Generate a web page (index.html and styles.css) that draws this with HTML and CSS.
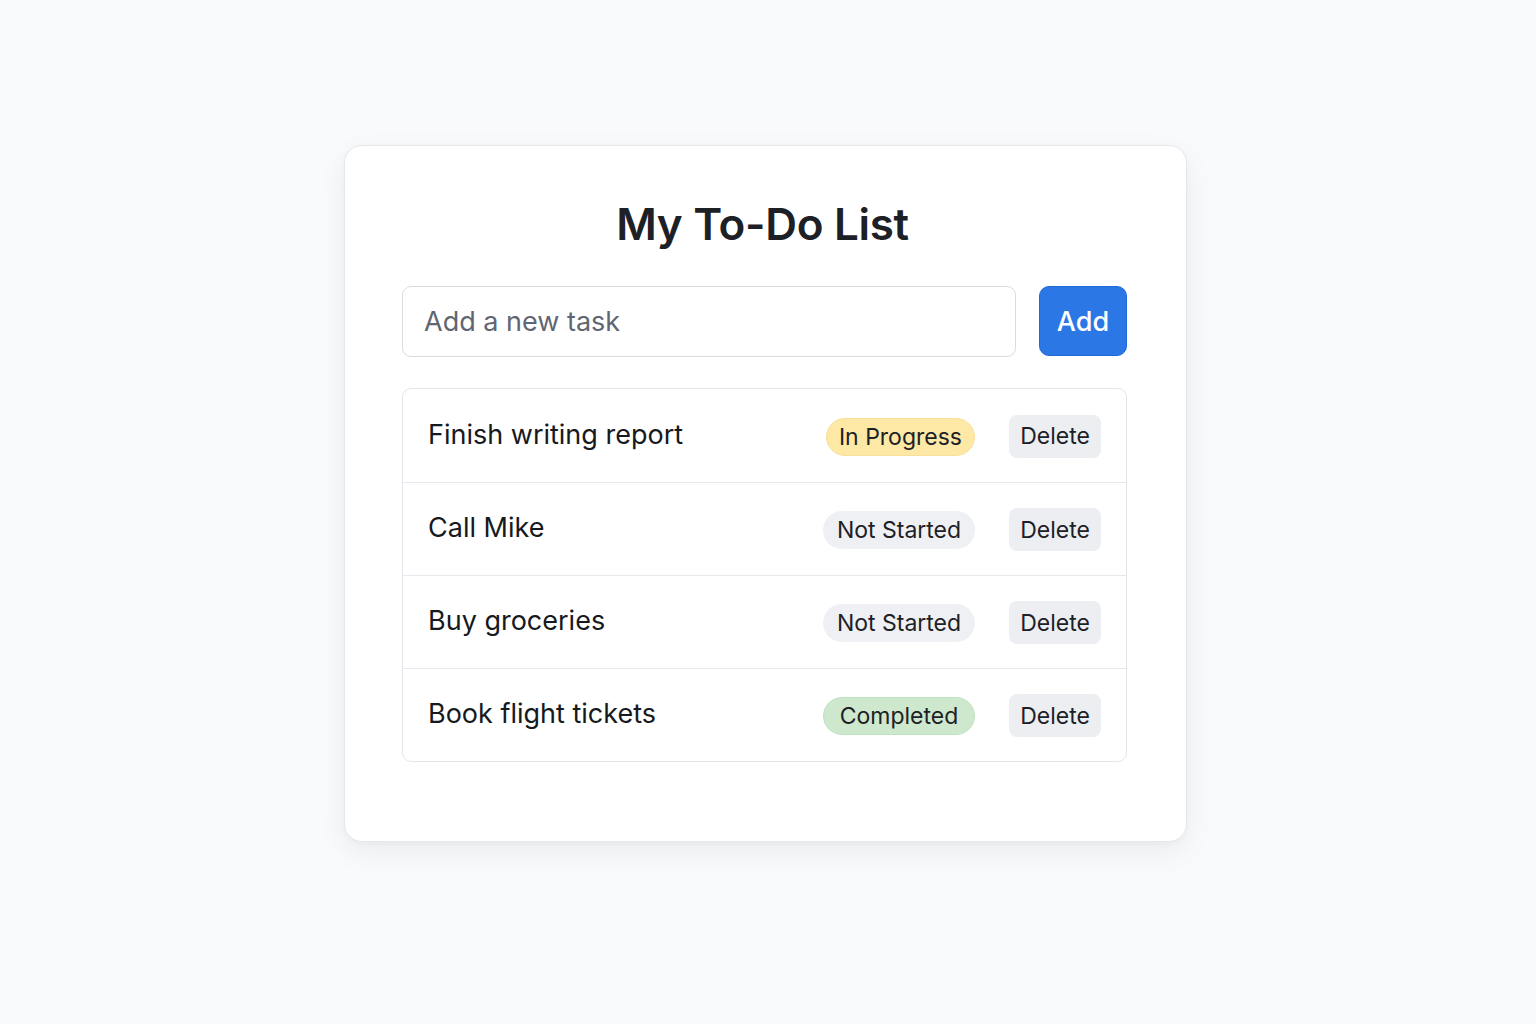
FILE: index.html
```html
<!DOCTYPE html>
<html lang="en">
<head>
<meta charset="utf-8">
<title>My To-Do List</title>
<link rel="stylesheet" href="styles.css">
</head>
<body>
<main class="page">
  <section class="card">
    <h1 class="title">My To-Do List</h1>
    <form class="add-form">
      <input class="task-input" type="text" placeholder="Add a new task">
      <button class="add-btn" type="button">Add</button>
    </form>
    <ul class="list">
      <li class="row">
        <span class="task">Finish writing report</span>
        <span class="badge badge-progress">In Progress</span>
        <button class="delete" type="button">Delete</button>
      </li>
      <li class="row">
        <span class="task">Call Mike</span>
        <span class="badge badge-idle">Not Started</span>
        <button class="delete" type="button">Delete</button>
      </li>
      <li class="row">
        <span class="task">Buy groceries</span>
        <span class="badge badge-idle">Not Started</span>
        <button class="delete" type="button">Delete</button>
      </li>
      <li class="row">
        <span class="task">Book flight tickets</span>
        <span class="badge badge-done">Completed</span>
        <button class="delete" type="button">Delete</button>
      </li>
    </ul>
  </section>
</main>
</body>
</html>
```

FILE: styles.css
```css
* { box-sizing: border-box; }
html, body { margin: 0; padding: 0; }
body {
  background: #f9fafb;
  font-family: Inter, "Noto Sans", "Liberation Sans", sans-serif;
  color: #1d2126;
  width: 1536px;
  height: 1024px;
}
.page {
  display: flex;
  padding: 145px 0 0 344px;
}
.card {
  width: 843px;
  height: 697px;
  background: #ffffff;
  border: 1px solid #e6e8ec;
  border-radius: 18px;
  box-shadow: 0 10px 30px rgba(17, 24, 39, 0.06), 0 2px 6px rgba(17, 24, 39, 0.03);
  padding: 50px 59px 0 57px;
  display: flex;
  flex-direction: column;
}
.title {
  margin: 0;
  padding-right: 4px;
  text-align: center;
  font-size: 44px;
  line-height: 56px;
  font-weight: 600;
  letter-spacing: -0.3px;
  color: #1d2126;
}
.add-form {
  margin: 34px 0 0;
  display: flex;
  gap: 23px;
}
.task-input {
  width: 614px;
  height: 71px;
  border: 1px solid #d9dce2;
  border-radius: 9px;
  padding: 0 21px;
  font-family: inherit;
  font-size: 27px;
  color: #1d2126;
  background: #fff;
  outline: none;
}
.task-input::placeholder { color: #5f6672; }
.add-btn {
  width: 88px;
  height: 70px;
  border: 1px solid #2069d8;
  border-radius: 10px;
  background: #2b77e6;
  color: #ffffff;
  font-family: inherit;
  font-size: 27px;
  font-weight: 500;
  padding: 0;
}
.list {
  list-style: none;
  margin: 31px 0 0;
  padding: 0;
  width: 725px;
  border: 1px solid #e4e6eb;
  border-radius: 9px;
}
.row {
  display: flex;
  align-items: center;
  height: 93px;
  padding: 0 25px 0 25px;
  border-top: 1px solid #e6e8ec;
}
.row:first-child { border-top: none; }
.task {
  flex: 1;
  font-size: 27px;
  color: #16191d;
  margin-top: -3px;
}
.badge {
  display: inline-flex;
  align-items: center;
  justify-content: center;
  height: 38px;
  min-width: 152px;
  padding: 0 12px;
  border-radius: 19px;
  font-size: 23px;
  color: #1d2126;
  margin: 2px 34px 0 0;
}
.badge-progress {
  min-width: 146px;
  background: #fde8a6;
  border: 1px solid #f8e099;
}
.badge-idle {
  background: #eef0f3;
}
.badge-done {
  background: #cde8cc;
  border: 1px solid #c2e1c1;
}
.delete {
  height: 43px;
  width: 92px;
  margin-top: 1px;
  border: none;
  border-radius: 8px;
  background: #eceef2;
  color: #1d2126;
  font-family: inherit;
  font-size: 23px;
  padding: 0;
}
```
